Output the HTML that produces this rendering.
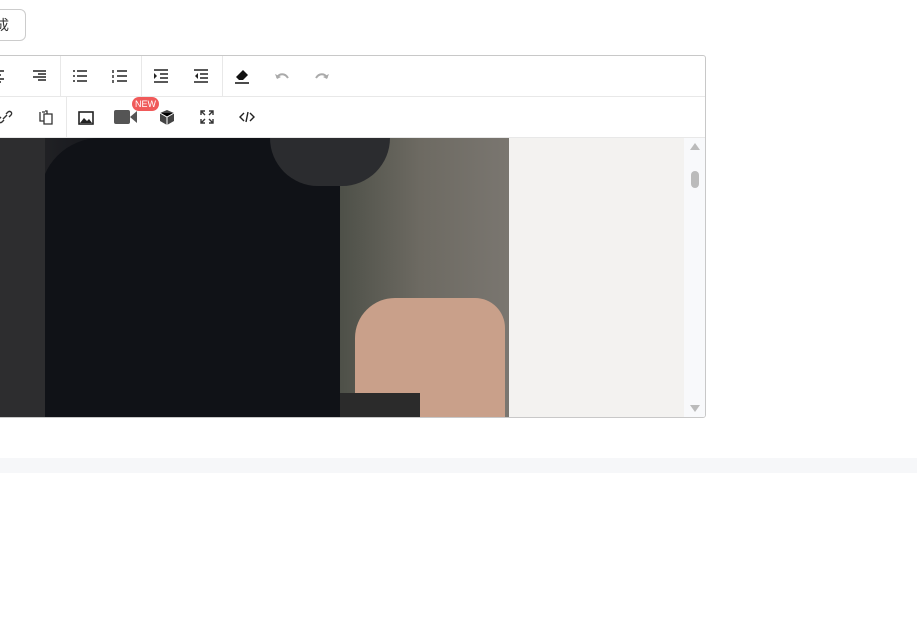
<!DOCTYPE html>
<html><head><meta charset="utf-8"><style>
body{margin:0;width:917px;height:625px;background:#fff;position:relative;overflow:hidden;font-family:"Liberation Sans","Noto Sans CJK SC",sans-serif}
.btn{position:absolute;left:-20px;top:9px;width:46px;height:32px;border:1px solid #ccc;border-radius:6px;box-sizing:border-box;font-size:14px;line-height:30px;text-align:right;padding-right:16px;color:#333}
.ed{position:absolute;left:-20px;top:55px;width:726px;height:363px;border:1px solid #c8c8c8;border-radius:3px;box-sizing:border-box;overflow:hidden}
.row{position:absolute;left:0;width:100%;height:41px;border-bottom:1px solid #e8e8e8;box-sizing:border-box}
.sep{position:absolute;top:0;width:1px;height:40px;background:#e8e8e8}
.ic{position:absolute;width:16px;height:16px}
.img{position:absolute;left:19px;top:82px;width:509px;height:279px;background:linear-gradient(90deg,#2a2a2a 0,#1d1e22 60px,#15171c 120px,#1a1c22 290px,#4a4d45 330px,#6d6a62 420px,#7a7670 509px)}
.gray{position:absolute;left:528px;top:82px;width:175px;height:279px;background:#f3f2f0}
.sb{position:absolute;left:703px;top:82px;width:22px;height:279px;background:#f8f9fb}
.band{position:absolute;left:0;top:458px;width:917px;height:15px;background:#f6f7f9}
</style></head><body>
<div class="btn">成</div>
<div class="ed">
 <div class="row" style="top:0">
  <div class="sep" style="left:79px"></div><div class="sep" style="left:160px"></div><div class="sep" style="left:241px"></div>
  <svg class="ic" style="left:10px;top:12px" viewBox="0 0 16 16"><path d="M0 3h13M3 7h7M0 11h13M3 14h7" stroke="#222" stroke-width="1.6"/></svg>
  <svg class="ic" style="left:50px;top:12px" viewBox="0 0 16 16"><path d="M2 3h13M7 6h8M2 9h13M7 12h8" stroke="#222" stroke-width="1.6"/></svg>
  <svg class="ic" style="left:91px;top:12px" viewBox="0 0 16 16"><path d="M5 3h10M5 8h10M5 13h10M1 3h2M1 8h2M1 13h2" stroke="#222" stroke-width="1.6"/></svg>
  <svg class="ic" style="left:131px;top:12px" viewBox="0 0 16 16"><path d="M5 3h10M5 8h10M5 13h10M1 2v3M1 7v3M1 12v3" stroke="#222" stroke-width="1.4"/></svg>
  <svg class="ic" style="left:172px;top:12px" viewBox="0 0 16 16"><path d="M1 2h14M7 6h8M7 10h8M1 14h14" stroke="#222" stroke-width="1.6"/><path d="M1 5l3 3-3 3z" fill="#222"/></svg>
  <svg class="ic" style="left:212px;top:12px" viewBox="0 0 16 16"><path d="M1 2h14M7 6h8M7 10h8M1 14h14" stroke="#222" stroke-width="1.6"/><path d="M5 5l-3 3 3 3z" fill="#222"/></svg>
  <svg class="ic" style="left:253px;top:12px" viewBox="0 0 16 16"><path d="M9 2l5 5-5 5H5L2 9z" fill="#111"/><path d="M1 15h14" stroke="#111" stroke-width="1.4"/></svg>
  <svg class="ic" style="left:293px;top:12px" viewBox="0 0 16 16"><path d="M3 10C5 5 11 5 14 10" stroke="#aaa" stroke-width="2" fill="none"/><path d="M1 6l2 5 4-2z" fill="#aaa"/></svg>
  <svg class="ic" style="left:333px;top:12px" viewBox="0 0 16 16"><path d="M13 10C11 5 5 5 2 10" stroke="#aaa" stroke-width="2" fill="none"/><path d="M15 6l-2 5-4-2z" fill="#aaa"/></svg>
 </div>
 <div class="row" style="top:41px">
  <div class="sep" style="left:85px"></div>
  <svg class="ic" style="left:16px;top:12px" viewBox="0 0 16 16"><path d="M6 10l4-4M4 8l-2 2a2 2 0 003 3l2-2M12 8l2-2a2 2 0 00-3-3l-2 2" stroke="#333" stroke-width="1.4" fill="none"/></svg>
  <svg class="ic" style="left:57px;top:12px" viewBox="0 0 16 16"><path d="M4 3h3M2 3v9h4M7 2h2v3M6 5h8v10H6z" stroke="#333" stroke-width="1.3" fill="none"/></svg>
  <svg class="ic" style="left:97px;top:13px" viewBox="0 0 16 16"><rect x="1" y="2" width="14" height="12" stroke="#222" stroke-width="1.6" fill="none"/><path d="M2 13l4-5 3 3 2-2 3 4z" fill="#222"/></svg>
  <svg style="position:absolute;left:133px;top:11px" width="24" height="18" viewBox="0 0 24 18"><rect x="0" y="2" width="16" height="14" rx="2" fill="#555"/><path d="M16 9l7-6v12z" fill="#555"/></svg>
  <div style="position:absolute;left:151px;top:0;width:27px;height:14px;border-radius:7px;background:#f05a5a;color:#fff;font-size:9px;line-height:14px;text-align:center">NEW</div>
  <svg class="ic" style="left:178px;top:12px" viewBox="0 0 16 16"><path d="M8 1l7 3v8l-7 4-7-4V4z" fill="#444"/><path d="M1 4l7 4 7-4M8 8v8" stroke="#fff" stroke-width="1"/></svg>
  <svg class="ic" style="left:218px;top:12px" viewBox="0 0 16 16"><path d="M2 6V2h4M10 2h4v4M14 10v4h-4M6 14H2v-4M2 2l4 4M14 2l-4 4M14 14l-4-4M2 14l4-4" stroke="#333" stroke-width="1.4" fill="none"/></svg>
  <svg class="ic" style="left:258px;top:12px" viewBox="0 0 16 16"><path d="M5 4L1 8l4 4M11 4l4 4-4 4M9 3L7 13" stroke="#222" stroke-width="1.4" fill="none"/></svg>
 </div>
 <div class="img">
  <div style="position:absolute;left:40px;top:0;width:300px;height:279px;background:#101217;border-radius:60px 40px 0 0"></div>
  <div style="position:absolute;left:270px;top:0;width:120px;height:48px;background:#2b2c2f;border-radius:0 0 60px 60px"></div>
  <div style="position:absolute;left:355px;top:160px;width:150px;height:119px;background:#c9a08a;border-radius:40px 30px 0 20px"></div>
  <div style="position:absolute;left:340px;top:255px;width:80px;height:24px;background:#2b2b2b"></div>
  <div style="position:absolute;left:0;top:0;width:45px;height:279px;background:#2d2d2f"></div>
 </div>
 <div class="gray"></div>
 <div class="sb">
  <svg style="position:absolute;left:6px;top:4px" width="10" height="8"><path d="M0 8L5 1l5 7z" fill="#bbb"/></svg>
  <div style="position:absolute;left:7px;top:33px;width:8px;height:17px;border-radius:4px;background:#bbb"></div>
  <svg style="position:absolute;left:6px;top:267px" width="10" height="8"><path d="M0 0L5 7l5-7z" fill="#bbb"/></svg>
 </div>
</div>
<div class="band"></div>
</body></html>
